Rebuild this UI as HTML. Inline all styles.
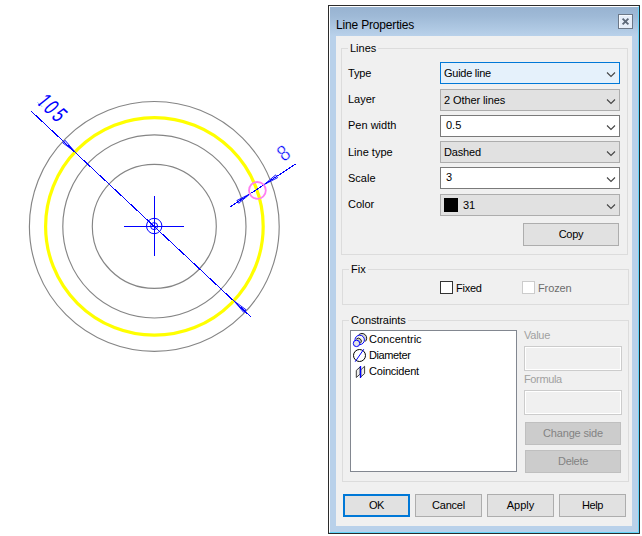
<!DOCTYPE html>
<html>
<head>
<meta charset="utf-8">
<title>Line Properties</title>
<style>
html,body{margin:0;padding:0;background:#fff;}
body{width:642px;height:536px;position:relative;overflow:hidden;font-family:"Liberation Sans",sans-serif;font-size:11px;color:#000;}
.abs{position:absolute;}
#draw{position:absolute;left:0;top:0;}
#win{position:absolute;left:328px;top:5px;width:310px;height:527px;border:1px solid #2b2b2b;background:#b9d1ea;}
#win .inner{position:absolute;left:0;top:0;right:0;bottom:0;border:1px solid #fff;border-right-color:#62d6fb;border-bottom-color:#62d6fb;}
#tbar{position:absolute;left:1px;top:1px;right:1px;height:29px;background:linear-gradient(#98b3d1 0%,#9eb9d6 30%,#abc5e0 65%,#b9d1ea 100%);}
#title{position:absolute;left:336px;top:18px;letter-spacing:-0.17px;font-size:12px;line-height:15px;white-space:nowrap;color:#000;}
#close{position:absolute;left:618px;top:14px;width:13px;height:13px;border:1px solid #6c7888;background:#e6eef9;box-shadow:inset 1px 1px 0 #f6faff;}
#body{position:absolute;left:336px;top:36px;width:296px;height:490px;background:#f0f0f0;}
.grp{position:absolute;border:1px solid #dcdcdc;box-sizing:border-box;}
.glab{position:absolute;background:#f0f0f0;padding:0 2px;line-height:13px;white-space:nowrap;}
.lab{position:absolute;line-height:13px;white-space:nowrap;}
.combo{position:absolute;left:440px;width:180px;height:22px;box-sizing:border-box;border:1px solid #adadad;background:#e1e1e1;}
.combo.white{background:#fff;border-color:#7a7a7a;}
.combo.focus{background:#e5f1fb;border-color:#0078d7;}
.combo span{position:absolute;left:3px;top:4px;line-height:13px;white-space:nowrap;}
.combo svg{position:absolute;left:165px;top:8.5px;}
.combo.white span{left:5px;top:3px;}
.btn{position:absolute;box-sizing:border-box;height:23px;border:1px solid #adadad;background:#e1e1e1;text-align:center;line-height:21px;white-space:nowrap;}
.btn.def{border:2px solid #0078d7;line-height:19px;}
.btn.dis{background:#cccccc;border-color:#bfbfbf;color:#838383;}
.chk{position:absolute;width:13px;height:13px;box-sizing:border-box;border:1px solid #333;background:#fff;}
.chk.dis{border-color:#cccccc;}
.tbox{position:absolute;box-sizing:border-box;border:1px solid #cccccc;box-shadow:inset 0 0 0 1px #fff;background:#f0f0f0;}
#list{position:absolute;left:350px;top:330px;width:167px;height:142px;box-sizing:border-box;border:1px solid #828790;background:#fff;}
.li{position:absolute;left:369px;line-height:13px;white-space:nowrap;}
</style>
</head>
<body>

<svg id="draw" width="326" height="536" viewBox="0 0 326 536">
  <g fill="none" stroke="#858585" stroke-width="1.15">
    <circle cx="154.3" cy="226.4" r="124.9"/>
    <circle cx="154.4" cy="226.4" r="91.6"/>
    <circle cx="154.3" cy="226.4" r="62"/>
  </g>
  <circle cx="154.4" cy="226.4" r="108.8" fill="none" stroke="#ffff00" stroke-width="3.2"/>
  <g fill="none" stroke="#0000ff" stroke-width="1" shape-rendering="crispEdges">
    <line x1="31.2" y1="111.2" x2="250.7" y2="316.8"/>
    <line x1="124" y1="226.5" x2="184" y2="226.5"/>
    <line x1="154.5" y1="196" x2="154.5" y2="256"/>
    <line x1="230.4" y1="206.7" x2="296" y2="163.8"/>
  </g>
  <g fill="none" stroke="#0000ff" stroke-width="1">
    <circle cx="154.2" cy="226" r="7.7"/>
    <circle cx="154.1" cy="226.1" r="3.5"/>
  </g>
  <!-- arrowheads -->
  <g fill="#0000ff" fill-opacity="0.2" stroke="#0000ff" stroke-width="0.9" stroke-linejoin="miter">
    <path d="M74.9 151.8 L65.1 140.3 L62.7 142.8 Z"/>
    <path d="M233.9 300.8 L243.7 312.3 L246.1 309.8 Z"/>
    <path d="M250.3 193.7 L236.9 200.5 L238.7 203.3 Z"/>
    <path d="M264.1 184.6 L277.6 177.7 L275.7 174.9 Z"/>
  </g>
  <circle cx="257.4" cy="190.4" r="8.4" fill="none" stroke="#ff80f2" stroke-width="1.8"/>
  <clipPath id="c1"><rect x="-5" y="-29.38" width="120" height="27.56"/><rect x="5.28" y="-2.32" width="2.80" height="2.82"/><rect x="13.57" y="-2.32" width="100" height="4.82"/></clipPath>
  <text clip-path="url(#c1)" transform="translate(34.98 102.60) rotate(43) skewX(-8) scale(0.68 1)" dx="0 1.99 3.86" font-family="Liberation Sans, sans-serif" font-size="22.6" fill="#0000ff">105</text>
  <text transform="translate(283.6 162.2) rotate(-35) scale(0.85 1)" font-family="Liberation Sans, sans-serif" font-size="22" fill="#0000ff" stroke="#ffffff" stroke-width="0.5">8</text>
</svg>

<div id="win"><div class="inner"></div><div id="tbar"></div></div>
<div id="title">Line Properties</div>
<div id="close"><svg width="13" height="13" viewBox="0 0 13 13" style="position:absolute;left:0;top:0"><path d="M3.6 3.6 L9.4 9.4 M9.4 3.6 L3.6 9.4" stroke="#5e6a7a" stroke-width="1.9" fill="none"/></svg></div>
<div id="body"></div>

<!-- Lines group -->
<div class="grp" style="left:341px;top:48px;width:287px;height:207px;"></div>
<div class="glab" style="left:348px;top:42px;">Lines</div>

<div class="lab" style="left:348px;top:67px;letter-spacing:-0.2px">Type</div>
<div class="combo focus" style="top:62px;"><span style="letter-spacing:-0.27px">Guide line</span><svg width="10" height="6" viewBox="0 0 10 6"><path d="M1 0.5 L5 4.5 L9 0.5" fill="none" stroke="#444" stroke-width="1.1"/></svg></div>

<div class="lab" style="left:348px;top:93px;">Layer</div>
<div class="combo" style="top:89px;"><span style="letter-spacing:-0.1px">2 Other lines</span><svg width="10" height="6" viewBox="0 0 10 6"><path d="M1 0.5 L5 4.5 L9 0.5" fill="none" stroke="#444" stroke-width="1.1"/></svg></div>

<div class="lab" style="left:348px;top:119px;">Pen width</div>
<div class="combo white" style="top:115px;"><span>0.5</span><svg width="10" height="6" viewBox="0 0 10 6"><path d="M1 0.5 L5 4.5 L9 0.5" fill="none" stroke="#444" stroke-width="1.1"/></svg></div>

<div class="lab" style="left:348px;top:146px;">Line type</div>
<div class="combo" style="top:141px;"><span style="letter-spacing:-0.15px">Dashed</span><svg width="10" height="6" viewBox="0 0 10 6"><path d="M1 0.5 L5 4.5 L9 0.5" fill="none" stroke="#444" stroke-width="1.1"/></svg></div>

<div class="lab" style="left:348px;top:172px;">Scale</div>
<div class="combo white" style="top:167px;"><span>3</span><svg width="10" height="6" viewBox="0 0 10 6"><path d="M1 0.5 L5 4.5 L9 0.5" fill="none" stroke="#444" stroke-width="1.1"/></svg></div>

<div class="lab" style="left:348px;top:198px;">Color</div>
<div class="combo" style="top:194px;"><div class="abs" style="left:3px;top:3px;width:14px;height:14px;background:#000;"></div><span style="left:22px;">31</span><svg width="10" height="6" viewBox="0 0 10 6"><path d="M1 0.5 L5 4.5 L9 0.5" fill="none" stroke="#444" stroke-width="1.1"/></svg></div>

<div class="btn" style="left:523px;top:223px;width:96px;letter-spacing:-0.25px">Copy</div>

<!-- Fix group -->
<div class="grp" style="left:342px;top:269px;width:287px;height:36px;"></div>
<div class="glab" style="left:349px;top:263px;">Fix</div>
<div class="chk" style="left:440px;top:281px;"></div>
<div class="lab" style="left:456px;top:282px;letter-spacing:-0.25px">Fixed</div>
<div class="chk dis" style="left:522px;top:281px;"></div>
<div class="lab" style="left:538px;top:282px;color:#6d6d6d;letter-spacing:-0.12px">Frozen</div>

<!-- Constraints group -->
<div class="grp" style="left:342px;top:320px;width:287px;height:162px;"></div>
<div class="glab" style="left:349px;top:314px;letter-spacing:-0.09px">Constraints</div>
<div id="list"></div>
<svg class="abs" style="left:352px;top:332px;" width="16" height="48" viewBox="0 0 16 48">
  <!-- concentric -->
  <path d="M4.4 4.5 L6.7 2.8 A4.7 4.7 0 0 1 13.3 9.5 L11 11.2 Z" fill="#d6d6ce"/>
  <path d="M6.7 2.8 A4.7 4.7 0 0 1 13.3 9.5" fill="none" stroke="#202020" stroke-width="1"/>
  <circle cx="7.7" cy="7.9" r="4.7" fill="#f6f6ee" stroke="#0000ff" stroke-width="1"/>
  <path d="M4.3 7.1 A2.9 2.9 0 0 1 8.5 11.2 L6.6 13.4 L2.4 9.3 Z" fill="#c8c8c0"/>
  <path d="M4.3 7.1 A2.9 2.9 0 0 1 8.5 11.2" fill="none" stroke="#202020" stroke-width="1"/>
  <circle cx="4.5" cy="11.4" r="3.2" fill="#e4e4e4" stroke="#0000ff" stroke-width="1"/>
  <!-- diameter -->
  <circle cx="7.5" cy="23.5" r="6" fill="none" stroke="#000" stroke-width="1"/>
  <line x1="3.2" y1="29.7" x2="11.8" y2="17.2" stroke="#0000ff" stroke-width="1"/>
  <!-- coincident -->
  <path d="M4.3 38.4 L8.1 35 L8.1 42.1 L4.3 45.5 Z" fill="#efefea" stroke="#2a2a2a" stroke-width="0.9"/>
  <path d="M8.8 37.8 L12.6 34.3 L12.6 41.6 L8.8 44.9 Z" fill="#efefea" stroke="#2a2a2a" stroke-width="0.9"/>
  <line x1="8.5" y1="34" x2="8.5" y2="46" stroke="#0000ff" stroke-width="1.3"/>
</svg>
<div class="li" style="top:333px;">Concentric</div>
<div class="li" style="top:349px;letter-spacing:-0.4px">Diameter</div>
<div class="li" style="top:365px;letter-spacing:-0.2px">Coincident</div>

<div class="lab" style="left:524px;top:329px;color:#a0a0a0;letter-spacing:-0.25px">Value</div>
<div class="tbox" style="left:524px;top:346px;width:98px;height:25px;"></div>
<div class="lab" style="left:524px;top:373px;color:#a0a0a0;letter-spacing:-0.36px">Formula</div>
<div class="tbox" style="left:524px;top:390px;width:98px;height:25px;"></div>
<div class="btn dis" style="left:525px;top:422px;width:96px;letter-spacing:-0.17px">Change side</div>
<div class="btn dis" style="left:525px;top:450px;width:96px;letter-spacing:-0.3px">Delete</div>

<!-- bottom buttons -->
<div class="btn def" style="left:343px;top:494px;width:67px;letter-spacing:-0.5px">OK</div>
<div class="btn" style="left:415px;top:494px;width:67px;letter-spacing:-0.2px">Cancel</div>
<div class="btn" style="left:487px;top:494px;width:67px;">Apply</div>
<div class="btn" style="left:559px;top:494px;width:67px;letter-spacing:-0.37px">Help</div>

</body>
</html>
